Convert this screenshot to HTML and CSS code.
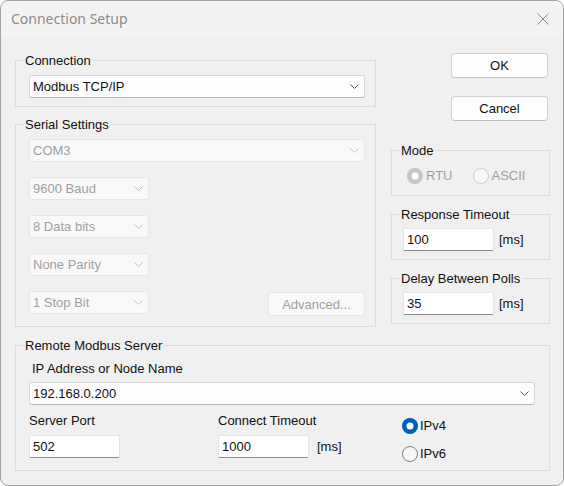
FILE: index.html
```html
<!DOCTYPE html>
<html>
<head>
<meta charset="utf-8">
<link rel="stylesheet" href="styles.css">
</head>
<body>
<div class="window">
  <div class="titlebar">
    <span class="title">Connection Setup</span>
    <svg class="close" width="12" height="12" viewBox="0 0 12 12"><path d="M0.5 0.5 L11.5 11.5 M11.5 0.5 L0.5 11.5" stroke="#8a8a8a" stroke-width="1" fill="none"/></svg>
  </div>
  <div class="content">
    <div class="top">
      <div class="left">
        <fieldset class="group g-conn">
          <legend>Connection</legend>
          <div class="inner">
            <div class="combo w-full"><span>Modbus TCP/IP</span><svg class="chev" width="9" height="5" viewBox="0 0 9 5"><polyline points="0.5,0.5 4.5,4.5 8.5,0.5" fill="none" stroke="#555" stroke-width="1"/></svg></div>
          </div>
        </fieldset>
        <fieldset class="group g-serial">
          <legend>Serial Settings</legend>
          <div class="inner stack">
            <div class="combo dis w-full"><span>COM3</span><svg class="chev" width="9" height="5" viewBox="0 0 9 5"><polyline points="0.5,0.5 4.5,4.5 8.5,0.5" fill="none" stroke="#c2c2c2" stroke-width="1"/></svg></div>
            <div class="combo dis w-small"><span>9600 Baud</span><svg class="chev" width="9" height="5" viewBox="0 0 9 5"><polyline points="0.5,0.5 4.5,4.5 8.5,0.5" fill="none" stroke="#c2c2c2" stroke-width="1"/></svg></div>
            <div class="combo dis w-small"><span>8 Data bits</span><svg class="chev" width="9" height="5" viewBox="0 0 9 5"><polyline points="0.5,0.5 4.5,4.5 8.5,0.5" fill="none" stroke="#c2c2c2" stroke-width="1"/></svg></div>
            <div class="combo dis w-small"><span>None Parity</span><svg class="chev" width="9" height="5" viewBox="0 0 9 5"><polyline points="0.5,0.5 4.5,4.5 8.5,0.5" fill="none" stroke="#c2c2c2" stroke-width="1"/></svg></div>
            <div class="row-between">
              <div class="combo dis w-small"><span>1 Stop Bit</span><svg class="chev" width="9" height="5" viewBox="0 0 9 5"><polyline points="0.5,0.5 4.5,4.5 8.5,0.5" fill="none" stroke="#c2c2c2" stroke-width="1"/></svg></div>
              <button class="btn dis adv">Advanced...</button>
            </div>
          </div>
        </fieldset>
      </div>
      <div class="right">
        <button class="btn ok">OK</button>
        <button class="btn cancel">Cancel</button>
        <fieldset class="group g-mode">
          <legend>Mode</legend>
          <div class="inner radios-h">
            <label class="radio dis"><svg width="16" height="16" viewBox="0 0 16 16"><circle cx="8" cy="8" r="8" fill="#c6c6c6"/><circle cx="8" cy="8" r="3.5" fill="#fff"/></svg><span>RTU</span></label>
            <label class="radio dis r-ascii"><svg width="16" height="16" viewBox="0 0 16 16"><circle cx="8" cy="8" r="7.5" fill="#f7f7f7" stroke="#cdcdcd" stroke-width="1"/></svg><span>ASCII</span></label>
          </div>
        </fieldset>
        <fieldset class="group g-resp">
          <legend>Response Timeout</legend>
          <div class="inner field-row">
            <div class="edit w-edit">100</div><span class="unit">[ms]</span>
          </div>
        </fieldset>
        <fieldset class="group g-delay">
          <legend>Delay Between Polls</legend>
          <div class="inner field-row">
            <div class="edit w-edit">35</div><span class="unit">[ms]</span>
          </div>
        </fieldset>
      </div>
    </div>
    <fieldset class="group g-remote">
      <legend>Remote Modbus Server</legend>
      <div class="inner">
        <div class="lbl lbl-ip">IP Address or Node Name</div>
        <div class="combo w-ip"><span>192.168.0.200</span><svg class="chev" width="9" height="5" viewBox="0 0 9 5"><polyline points="0.5,0.5 4.5,4.5 8.5,0.5" fill="none" stroke="#555" stroke-width="1"/></svg></div>
        <div class="remote-row">
          <div class="col-port">
            <div class="lbl">Server Port</div>
            <div class="edit w-edit">502</div>
          </div>
          <div class="col-timeout">
            <div class="lbl">Connect Timeout</div>
            <div class="field-row"><div class="edit w-edit">1000</div><span class="unit unit-wide">[ms]</span></div>
          </div>
          <div class="col-ip">
            <label class="radio"><svg width="16" height="16" viewBox="0 0 16 16"><circle cx="8" cy="8" r="8" fill="#005fb8"/><circle cx="8" cy="8" r="3.5" fill="#fff"/></svg><span>IPv4</span></label>
            <label class="radio"><svg width="16" height="16" viewBox="0 0 16 16"><circle cx="8" cy="8" r="7.5" fill="#f7f7f7" stroke="#808080" stroke-width="1"/></svg><span>IPv6</span></label>
          </div>
        </div>
      </div>
    </fieldset>
  </div>
</div>
</body>
</html>
```
FILE: styles.css
```css
* { box-sizing: border-box; }
html, body { margin: 0; padding: 0; background: #ffffff; }
body {
  font-family: "Liberation Sans", Arial, sans-serif;
  font-size: 13px;
  color: #111;
}
.window {
  width: 564px;
  height: 486px;
  border: 1px solid #a3a3a3;
  border-radius: 8px;
  background: #f0f0f0;
  overflow: hidden;
}
.titlebar {
  height: 37px;
  background: #f3f3f3;
  display: flex;
  align-items: center;
  justify-content: space-between;
  padding: 0 14px 2px 10px;
}
.title {
  font-family: "Noto Sans", "Open Sans", sans-serif;
  font-size: 14px;
  color: #8c8c8c;
}
.close { display: block; margin-top: 1px; }

.content { padding: 15px 13px 0 14px; }
.top { display: flex; gap: 15px; }
.left { width: 361px; display: flex; flex-direction: column; }
.right { width: 159px; display: flex; flex-direction: column; }

.group {
  margin: 0;
  min-width: 0;
  border: 1px solid #dcdcdc;
  padding: 0 0 0 7px;
}
.group legend {
  padding: 0 2px;
  line-height: 15px;
}
.g-conn { padding-top: 7px; padding-bottom: 8px; }
.g-conn .inner, .g-serial .inner, .g-remote .inner { margin-left: 6px; }
.g-serial { margin-top: 10px; padding-top: 7px; padding-bottom: 10px; }
.stack { display: flex; flex-direction: column; gap: 15px; }
.row-between { display: flex; justify-content: space-between; align-items: flex-start; width: 336px; }

.combo {
  height: 23px;
  display: flex;
  align-items: center;
  justify-content: space-between;
  padding: 0 5px 0 3px;
  background: #fdfdfd;
  border: 1px solid #d6d6d6;
  border-bottom-color: #b8b8b8;
  border-radius: 3px;
}
.combo.dis {
  background: #f9f9f9;
  border-color: #e6e6e6;
  color: #a0a0a0;
}
.chev { display: block; }
.w-full { width: 336px; }
.w-small { width: 120px; }
.w-ip { width: 506px; }

.btn {
  font-family: inherit;
  font-size: 13px;
  color: #111;
  background: #fdfdfd;
  border: 1px solid #d0d0d0;
  border-bottom-color: #c0c0c0;
  border-radius: 4px;
  padding: 0;
  width: 97px;
  height: 25px;
}
.btn.dis {
  background: #f9f9f9;
  border-color: #e6e6e6;
  color: #a0a0a0;
}
.adv { margin-top: 1px; height: 24px; }
.ok { align-self: flex-end; margin-right: 2px; }
.cancel { align-self: flex-end; margin-right: 2px; margin-top: 18px; }

.g-mode { margin-top: 22px; padding-top: 10px; padding-bottom: 11px; }
.g-mode .inner { margin-left: 8px; }
.radios-h { display: flex; align-items: center; height: 16px; }
.radio { display: flex; align-items: center; gap: 3px; height: 16px; line-height: 16px; }
.radio svg { display: block; flex: none; }
.radio.dis { color: #a0a0a0; }
.r-ascii { margin-left: 21px; gap: 2px; }

.g-resp { margin-top: 11px; padding-top: 6px; padding-bottom: 8px; }
.g-delay { margin-top: 11px; padding-top: 6px; padding-bottom: 8px; }
.g-resp .inner, .g-delay .inner { margin-left: 4px; }
.field-row { display: flex; align-items: center; }
.edit {
  height: 23px;
  display: flex;
  align-items: center;
  padding: 0 3px;
  background: #ffffff;
  border: 1px solid #e4e4e4;
  border-bottom-color: #8a8a8a;
  border-radius: 2px;
}
.w-edit { width: 91px; }
.unit { margin-left: 5px; }
.unit-wide { margin-left: 8px; }

.g-remote { margin-top: 11px; padding-top: 8px; padding-bottom: 8px; }
.lbl { line-height: 15px; }
.lbl-ip { margin-left: 3px; margin-bottom: 6px; }
.remote-row { display: flex; margin-top: 8px; }
.col-port { width: 189px; display: flex; flex-direction: column; gap: 7px; }
.col-timeout { width: 184px; display: flex; flex-direction: column; gap: 7px; }
.col-ip { display: flex; flex-direction: column; gap: 12px; padding-top: 5px; }
.col-ip .radio { gap: 2px; }
```
